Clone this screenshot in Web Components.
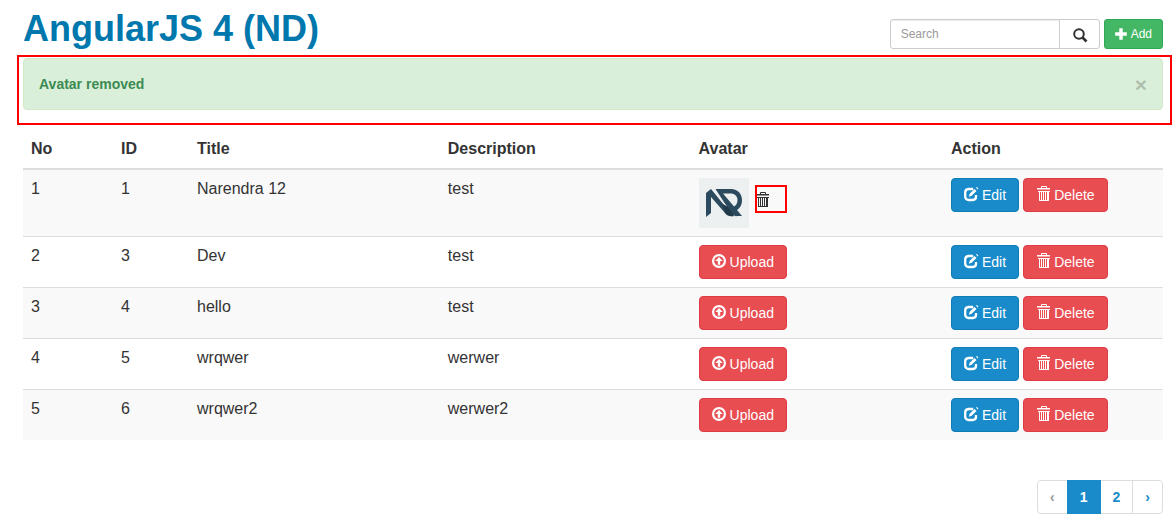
<!DOCTYPE html>
<html lang="en">
<head>
<meta charset="utf-8">
<meta name="viewport" content="width=device-width, initial-scale=1">
<title>AngularJS 4 (ND)</title>
<style>
  body { margin: 0; background: #fff; color: #333; font: 16px/22px "Liberation Sans", Arial, sans-serif; }
</style>
</head>
<body>
<nd-page>
  <nd-toolbar slot="header" heading="AngularJS 4 (ND)"></nd-toolbar>
  <nd-alert slot="alert">Avatar removed</nd-alert>
  <nd-table></nd-table>
  <nd-pagination slot="footer"></nd-pagination>
</nd-page>

<script>
const render = (host, html) => {
  const t = document.createElement('template');
  t.innerHTML = html;
  const root = host.attachShadow({ mode: 'open' });
  root.append(t.content.cloneNode(true));
  return root;
};

const ICONS = {
  search: '<circle cx="6" cy="6" r="4.8" fill="none" stroke="currentColor" stroke-width="2"/><path d="M9.500 9.500l4 4" stroke="currentColor" stroke-width="2.600"/>',
  plus: '<path d="M5 .2h4V5h4.800v4H9v4.800H5V9H.2V5H5z"/>',
  edit: '<path d="M9.200 2H4.500A3.500 3.500 0 0 0 1.200 5.500v4.200A3.300 3.300 0 0 0 4.500 13h4.300A3.300 3.300 0 0 0 12 9.700V8" fill="none" stroke="currentColor" stroke-width="2.300"/><path d="M10.500 2l2 2-4.800 4.800L4.800 9.700l.9-2.900zM12 .6l.9-.6 1.500 1.500-.7.9z"/>',
  trash: '<path d="M5.500 1.500V-.5h5v2" fill="none" stroke="currentColor" stroke-width="1"/><path d="M1 1h13v1.500H1zM2 4h12v1h-1v9H3V5H2z"/><path d="M4.500 5v8M6.500 5v8M8.500 5v8M10.500 5v8" stroke="var(--icon-gap, #e84d52)" stroke-width="1"/>',
  upload: '<circle cx="7" cy="7" r="5.900" fill="none" stroke="currentColor" stroke-width="2.200"/><path d="M7 3l3.700 4H8.200v3.700H5.800V7H3.300z"/>'
};

customElements.define('nd-icon', class extends HTMLElement {
  connectedCallback() {
    if (this.shadowRoot) return;
    render(this, `<style>
      :host { display: inline-flex; flex: none; width: var(--icon-size, 14px); height: var(--icon-size, 14px); }
      svg { width: 100%; height: 100%; fill: currentColor; overflow: visible; }
    </style><svg viewBox="0 0 14 14" aria-hidden="true">${ICONS[this.getAttribute('name')]}</svg>`);
  }
});

customElements.define('nd-button', class extends HTMLElement {
  connectedCallback() {
    if (this.shadowRoot) return;
    render(this, `<style>
      :host { display: inline-flex; --bg: #e84d52; --line: #df3b44; }
      :host([kind=primary]) { --bg: #198bca; --line: #107cb4; }
      :host([kind=success]) { --bg: #43b764; --line: #2fa956; --icon-size: 12px; }
      button { display: flex; align-items: center; gap: 4px; margin: 0; padding: 6px 12px;
        border: 1px solid var(--line); border-radius: 4px; background: var(--bg); color: #fff;
        font: 14px/20px "Liberation Sans", Arial, sans-serif; white-space: nowrap; cursor: pointer; }
      :host([kind=success]) button { padding: 5px 10px; font-size: 12px; line-height: 18px; border-radius: 3px; }
      nd-icon { margin-bottom: 2px; }
      :host([kind=success]) nd-icon { margin-bottom: 0; }
    </style><button type="button"><nd-icon name="${this.getAttribute('icon')}"></nd-icon><slot></slot></button>`);
  }
});

customElements.define('nd-page', class extends HTMLElement {
  constructor() {
    super();
    render(this, `<style>
      :host { display: block; padding: 8px 12px 10px 23px; }
      .footer { display: flex; justify-content: flex-end; padding-top: 40px; }
    </style>
    <slot name="header"></slot><slot name="alert"></slot>
    <main><slot></slot></main>
    <div class="footer"><slot name="footer"></slot></div>`);
  }
});

customElements.define('nd-toolbar', class extends HTMLElement {
  constructor() {
    super();
    render(this, `<style>
      :host { display: block; }
      header { display: flex; justify-content: space-between; align-items: flex-start; min-height: 50px; }
      h1 { margin: 0; color: #0078ae; font-size: 36px; line-height: 42px; font-weight: bold; white-space: nowrap; }
      .tools { display: flex; gap: 4px; padding-top: 11px; }
      form { display: flex; }
      input { box-sizing: border-box; width: 170px; height: 30px; margin: 0; padding: 5px 10px; border: 1px solid #ccc;
        border-radius: 3px 0 0 3px; font: 12px/18px "Liberation Sans", Arial, sans-serif; color: #555;
        box-shadow: inset 0 1px 1px rgba(0,0,0,.075); }
      input::placeholder { color: #999; opacity: 1; }
      .go { box-sizing: border-box; display: flex; align-items: center; justify-content: center; width: 41px; height: 30px;
        margin: 0 0 0 -1px; padding: 2px 0 0 1px; border: 1px solid #ccc; border-radius: 0 3px 3px 0; background: #fff; color: #333; }
    </style>
    <header><h1></h1>
      <div class="tools">
        <form role="search"><input type="text" placeholder="Search" aria-label="Search"><button class="go" type="button" aria-label="Search"><nd-icon name="search"></nd-icon></button></form>
        <nd-button kind="success" icon="plus">Add</nd-button>
      </div>
    </header>`);
  }
  connectedCallback() { this.shadowRoot.querySelector('h1').textContent = this.getAttribute('heading'); }
});

customElements.define('nd-alert', class extends HTMLElement {
  constructor() {
    super();
    render(this, `<style>
      :host { display: block; position: relative; margin-bottom: 20px; }
      .box { display: flex; justify-content: space-between; align-items: center; padding: 15px; border: 1px solid #d0e9c6;
        border-radius: 4px; background: #daefd9; color: #3c8b52; font-size: 14px; line-height: 20px; }
      button { margin: 0; padding: 2px 0 0; border: 0; background: none; color: #000; opacity: .2; cursor: pointer;
        font: bold 21px/18px "Liberation Sans", Arial, sans-serif; }
      .outline { position: absolute; inset: -3px -9px -15px -6px; border: 2px solid #f00; pointer-events: none; }
    </style>
    <div class="box" role="alert"><strong><slot></slot></strong><button type="button" aria-label="Close">×</button></div>
    <div class="outline"></div>`);
  }
});

customElements.define('nd-avatar', class extends HTMLElement {
  constructor() {
    super();
    render(this, `<style>
      :host { display: flex; align-items: flex-start; gap: 6px; }
      .logo { width: 50px; height: 50px; flex: none; }
      button { position: relative; display: flex; align-items: center; width: 32px; height: 28px; margin: 7px 0 0; padding: 0;
        border: 0; background: none; color: #333; --icon-gap: #f9f9f9; }
      nd-icon { margin-top: 2px; }
      .outline { position: absolute; inset: 0; border: 2px solid #f00; pointer-events: none; }
    </style>
    <svg class="logo" viewBox="0 0 50 50" role="img" aria-label="ND logo">
      <path fill="#ecf0f1" d="M0 0h50v50H0z"/>
      <path fill="#2c4a5e" d="M7 15l5-4 22 27q-5 1-8-3L12 19v16l-5 4z"/>
      <path fill="#2c4a5e" fill-rule="evenodd" d="M16.500 11H32c7 0 11 5 11 11 0 5-2 8-5 10l5 6h-5q-3 1-6-3zM24 15.500l11 13c2-1 3.500-3 3.500-6.500 0-4-3-6.500-7-6.500z"/>
      <path stroke="#ecf0f1" stroke-width="1" d="M13.500 11l14 17.500"/>
      <path fill="#203a4b" d="M24 26l5 3 6 9q-5 1-9-3z"/>
    </svg>
    <button type="button" aria-label="Remove avatar"><nd-icon name="trash"></nd-icon><span class="outline"></span></button>`);
  }
});

customElements.define('nd-table', class extends HTMLElement {
  constructor() {
    super();
    const rows = [
      [1, 1, 'Narendra 12', 'test', true],
      [2, 3, 'Dev', 'test'],
      [3, 4, 'hello', 'test'],
      [4, 5, 'wrqwer', 'werwer'],
      [5, 6, 'wrqwer2', 'werwer2']
    ];
    render(this, `<style>
      :host { display: block; }
      table { width: 100%; table-layout: fixed; border-collapse: separate; border-spacing: 0; }
      .no { width: 90px; } .id { width: 76px; } .text { width: 22%; } .action { width: 220px; }
      th, td { padding: 8px; text-align: left; vertical-align: top; }
      th { border-bottom: 2px solid #ddd; }
      tr + tr td { border-top: 1px solid #ddd; }
      tbody tr:nth-child(odd) { background: #f9f9f9; }
      .actions { display: flex; align-items: flex-start; gap: 4px; }
    </style>
    <table>
      <colgroup><col class="no"><col class="id"><col class="text"><col class="text"><col><col class="action"></colgroup>
      <thead><tr><th>No</th><th>ID</th><th>Title</th><th>Description</th><th>Avatar</th><th>Action</th></tr></thead>
      <tbody>${rows.map(([no, id, title, text, avatar]) => `<tr><td>${no}</td><td>${id}</td><td>${title}</td><td>${text}</td>
        <td><div class="actions">${avatar ? '<nd-avatar></nd-avatar>' : '<nd-button icon="upload">Upload</nd-button>'}</div></td>
        <td><div class="actions"><nd-button kind="primary" icon="edit">Edit</nd-button><nd-button icon="trash">Delete</nd-button></div></td></tr>`).join('')}</tbody>
    </table>`);
  }
});

customElements.define('nd-pagination', class extends HTMLElement {
  constructor() {
    super();
    render(this, `<style>
      :host { display: block; }
      nav { display: flex; font-size: 14px; line-height: 20px; font-weight: bold; }
      a { padding: 6px 12px; border: 1px solid #ddd; background: #fff; color: #198bca; text-decoration: none; }
      a + a { margin-left: -1px; }
      a:first-child { border-radius: 4px 0 0 4px; color: #999; }
      a:last-child { border-radius: 0 4px 4px 0; }
      a[aria-current] { position: relative; background: #198bca; border-color: #198bca; color: #fff; }
    </style>
    <nav aria-label="Pages"><a href="#prev">‹</a><a href="#1" aria-current="page">1</a><a href="#2">2</a><a href="#next">›</a></nav>`);
  }
});
</script>
</body>
</html>
